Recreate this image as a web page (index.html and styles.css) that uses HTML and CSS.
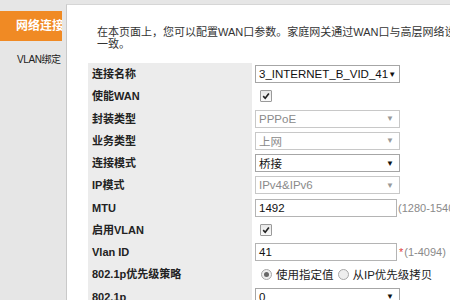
FILE: index.html
```html
<!DOCTYPE html>
<html lang="zh-CN">
<head>
  <meta charset="UTF-8" />
  <title>WAN配置</title>
  <link rel="stylesheet" href="styles.css">
</head>
<body>

<div class="page">
  <aside class="sidebar">
    <div class="tab">网络连接</div>
    <div class="subitem">VLAN绑定</div>
  </aside>

  <main class="panel">
    <p class="intro">在本页面上，您可以配置WAN口参数。家庭网关通过WAN口与高层网络设备通信，WAN口参数需与上层设备保持<br>一致。</p>

    <div class="form">
      <div class="label">连接名称</div>
      <div class="value">
        <div class="select"><span>3_INTERNET_B_VID_41</span><span class="arrow">▼</span></div>
      </div>

      <div class="label">使能WAN</div>
      <div class="value"><span class="check"><svg viewBox="0 0 10 10" width="8" height="8"><path d="M1.5 5.2 L4 7.8 L8.6 1.8" fill="none" stroke="#222" stroke-width="2"/></svg></span></div>

      <div class="label">封装类型</div>
      <div class="value">
        <div class="select disabled"><span>PPPoE</span><span class="arrow">▼</span></div>
      </div>

      <div class="label">业务类型</div>
      <div class="value">
        <div class="select disabled"><span>上网</span><span class="arrow">▼</span></div>
      </div>

      <div class="label">连接模式</div>
      <div class="value">
        <div class="select"><span>桥接</span><span class="arrow">▼</span></div>
      </div>

      <div class="label">IP模式</div>
      <div class="value">
        <div class="select disabled"><span>IPv4&amp;IPv6</span><span class="arrow">▼</span></div>
      </div>

      <div class="label">MTU</div>
      <div class="value">
        <div class="input">1492</div><span class="hint">(1280-1540)</span>
      </div>

      <div class="label">启用VLAN</div>
      <div class="value"><span class="check"><svg viewBox="0 0 10 10" width="8" height="8"><path d="M1.5 5.2 L4 7.8 L8.6 1.8" fill="none" stroke="#222" stroke-width="2"/></svg></span></div>

      <div class="label">Vlan ID</div>
      <div class="value">
        <div class="input">41</div><span class="req">*</span><span class="hint">(1-4094)</span>
      </div>

      <div class="label">802.1p优先级策略</div>
      <div class="value">
        <span class="radio on"></span><span class="opt">使用指定值</span>
        <span class="radio"></span><span class="opt">从IP优先级拷贝</span>
      </div>

      <div class="label">802.1p</div>
      <div class="value">
        <div class="select"><span>0</span><span class="arrow">▼</span></div>
      </div>
    </div>
  </main>
</div>

</body>
</html>
```

FILE: styles.css
```css
body {
  margin: 0;
  width: 450px;
  height: 300px;
  overflow: hidden;
  background-color: #e6e6e6;
  font-family: "Liberation Sans", "Noto Sans CJK SC", sans-serif;
  font-size: 11px;
  color: #222;
}
.page {
  display: flex;
  align-items: flex-start;
}
.sidebar {
  width: 66px;
  flex: none;
  padding-top: 11px;
}
.tab {
  width: 46px;
  height: 30px;
  padding-left: 16px;
  background-color: #f08a24;
  color: white;
  font-size: 12px;
  font-weight: bold;
  line-height: 30px;
  white-space: nowrap;
  overflow: hidden;
}
.subitem {
  padding-left: 17px;
  margin-top: 10px;
  font-size: 10px;
  letter-spacing: -0.4px;
  color: #222;
  white-space: nowrap;
}
.panel {
  flex: none;
  width: 600px;
  height: 300px;
  margin-top: 4px;
  padding: 21px 0 0 21px;
  background: white;
  border-left: 1px solid #c9c9c9;
  border-top: 1px solid #d6d6d6;
}
.intro {
  margin: 0 0 13px 9px;
  line-height: 12px;
  color: #333;
  white-space: nowrap;
}
.form {
  display: grid;
  grid-template-columns: 164px 1fr;
  grid-auto-rows: 22.25px;
}
.label {
  background-color: #ececec;
  padding-left: 4px;
  font-weight: bold;
  line-height: 22px;
  white-space: nowrap;
}
.value {
  display: flex;
  align-items: center;
  padding-left: 3px;
  white-space: nowrap;
}
.select {
  width: 145px;
  height: 18px;
  box-sizing: border-box;
  border: 1px solid #a6a6a6;
  background: white;
  display: flex;
  align-items: center;
  justify-content: space-between;
  padding: 0 5px 0 3px;
  font-size: 11.5px;
  color: #111;
}
.select.disabled {
  border-color: #c8c8c8;
  color: #8a8a8a;
}
.arrow {
  font-size: 8px;
}
.select.disabled .arrow {
  color: #999;
}
.input {
  width: 142px;
  height: 18px;
  box-sizing: border-box;
  border: 1px solid #b4b4b4;
  padding-left: 3px;
  font-size: 11.5px;
  line-height: 16px;
  color: #111;
}
.hint {
  color: #8a8a8a;
  margin-left: 1px;
  font-size: 11px;
}
.req {
  color: #e04040;
  margin-left: 2px;
}
.check {
  width: 10px;
  height: 10px;
  margin-left: 5px;
  border: 1px solid #9a9a9a;
  border-radius: 1px;
  background: linear-gradient(#e8e8e8, #fafafa);
  display: flex;
  align-items: center;
  justify-content: center;
}
.radio {
  width: 9px;
  height: 9px;
  margin-left: 6px;
  border: 1px solid #a8a8a8;
  border-radius: 50%;
  background: #eee;
  position: relative;
}
.radio.on::after {
  content: "";
  position: absolute;
  left: 2px;
  top: 2px;
  width: 5px;
  height: 5px;
  border-radius: 50%;
  background: #666;
}
.radio + .opt {
  margin-left: 4px;
  font-size: 11.5px;
}
.opt + .radio {
  margin-left: 4px;
}
```
